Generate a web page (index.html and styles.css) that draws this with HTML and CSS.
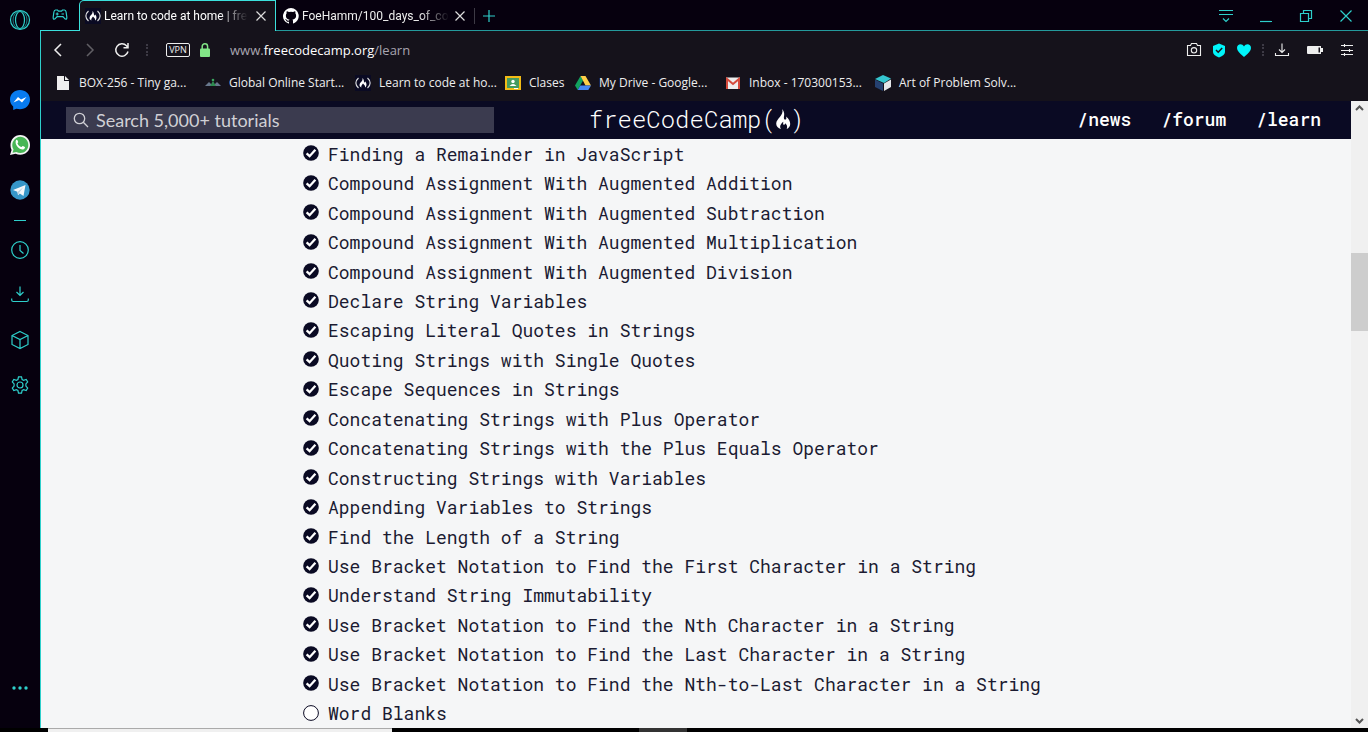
FILE: index.html
```html
<!DOCTYPE html>
<html lang="en">
<head>
<meta charset="utf-8">
<title>Learn to code at home | freeCodeCamp.org</title>
<link rel="stylesheet" href="styles.css">
</head>
<body>
<svg class="defs" aria-hidden="true">
  <symbol id="done" viewBox="0 0 16 16"><circle cx="8" cy="8" r="7.800" fill="#0a0a23"/><path d="M3.600 8.400l3 2.800 5.800-6.400" fill="none" stroke="#fff" stroke-width="2.300"/></symbol>
  <symbol id="todo" viewBox="0 0 16 16"><circle cx="8" cy="8" r="7.400" fill="#fff" stroke="#0a0a23"/></symbol>
  <symbol id="flame" viewBox="0 0 16 24"><path d="M7.300 2C9.500 5 9.500 7.500 8.900 10c-.3 1.800.6 2.800 1.500 2.600 1.200-.2 1.200-1.600.5-3.100 3.200 2 4.300 5.200 4.300 7.500 0 2.400-1.500 4-3.500 5 1-2.500.3-4.100-1.500-5.700-.3 1.300-1 1.700-1.600 1.400-.8-.4-.3-1.700-.3-3C5.500 17 4.300 19.500 6 22 3 21 1.200 19.300 1.200 16.700 1.200 11.500 9 9 7.300 2z" fill="#fff"/></symbol>
  <symbol id="fcc" viewBox="0 0 16 16"><path fill="#0a0a23" d="M0 0h16v16H0z"/><path d="M3.500 3C0 6 0 10 3.500 13M12.500 3c3.500 3 3.500 7 0 10" fill="none" stroke="#ddd" stroke-width="1.200"/><path d="M7.500 3c2 2 1 4 2 4.500.6.2.6-.6.4-1.200C12 8 12 11.500 10 12.500c.5-2-.8-2.500-2-4-1 1.500-2.200 2.500-1.600 4C3 11 5 7.500 7 6c.6-1 .7-2 .5-3z" fill="#fff"/></symbol>
</svg>
<div class="window">
  <aside class="sidebar">
    <button class="side opera" aria-label="Opera menu"><svg width="22" height="22" viewBox="0 0 22 22" class="line"><circle cx="11" cy="11" r="9.500"/><ellipse cx="11" cy="11" rx="4.500" ry="8.500"/><ellipse cx="11" cy="11" rx="7" ry="9" stroke-width=".6"/></svg></button>
    <button class="side" aria-label="Messenger"><svg width="22" height="22" viewBox="0 0 22 22"><path d="M11 1C5.400 1 1 5 1 10.500c0 3 1.200 5.300 3.200 7V21l3.200-1.200c1.200.3 2.300.5 3.600.5 5.600 0 10-4.300 10-9.800S16.600 1 11 1z" fill="#087bef"/><path d="M4.500 13.500L9 8l3 2.500L17.500 8 13 13.500 10 11z" fill="#fff"/></svg></button>
    <button class="side" aria-label="WhatsApp"><svg width="22" height="22" viewBox="0 0 22 22"><path d="M1 21l1.600-5C-.8 9 4 1 11.200 1 17 1 21 5.500 21 11c0 7.500-7.500 12-14.500 8.700z" fill="#f4f4f4"/><path d="M3.500 18.700l1-3.200C1 9.500 5.500 2.700 11.300 2.700c4.700 0 8 3.800 8 8.200 0 6-6 10-12 7z" fill="#47b655"/><path d="M7 6.200c.9-.8 1.500-.4 2.200 1.800.1.600-.8 1-.7 1.400.8 1.800 2 2.900 3.800 3.600.5 0 1-1.200 1.500-1.100 2 .8 2.500 1.200 2.200 1.900C14 19 4.500 11.500 7 6.200z" fill="#fff"/></svg></button>
    <button class="side" aria-label="Telegram"><svg width="22" height="22" viewBox="0 0 22 22"><circle cx="11" cy="11" r="9.700" fill="#3696c8"/><path d="M4 11l12.500-5-2 11-3.700-2.600L9 16.200l-.7-3.400z" fill="#f4f8fa"/><path d="M8.500 13l6-5-4.200 5.500-.8 2.200z" fill="#b8cfdd"/></svg></button>
    <hr class="divider">
    <button class="side" aria-label="History"><svg width="20" height="20" viewBox="0 0 20 20" class="line"><circle cx="10" cy="10" r="8.300"/><path d="M10 5v5.500l3.500 3"/></svg></button>
    <button class="side" aria-label="Downloads"><svg width="20" height="20" viewBox="0 0 20 20" class="line"><path d="M10 1.500v9M6.500 7l3.500 3.500L13.500 7M1.700 13.500V15q0 1.500 1.500 1.500h13.600q1.500 0 1.500-1.500v-1.500"/></svg></button>
    <button class="side" aria-label="Extensions"><svg width="20" height="20" viewBox="0 0 20 20" class="line"><path d="M10 1.500l8 4v9l-8 4-8-4v-9zM2 5.500l8 4 8-4M10 9.500v9"/></svg></button>
    <button class="side" aria-label="Settings"><svg width="20" height="20" viewBox="0 0 20 20" class="line"><circle cx="10" cy="10" r="3"/><path d="M8.500 1.800h3l.6 2.700 1.500.8 2.600-.9 1.500 2.600-1.800 1.900v2.200l1.800 1.900-1.500 2.600-2.600-.9-1.500.8-.6 2.700h-3l-.6-2.700-1.500-.8-2.600.9L2.300 13l1.800-1.900V8.900L2.300 7l1.500-2.600 2.600.9 1.500-.8z"/></svg></button>
    <button class="side more" aria-label="More"><svg width="20" height="8" viewBox="0 0 20 8"><g fill="#2ecfcb"><circle cx="4" cy="4" r="1.700"/><circle cx="10" cy="4" r="1.700"/><circle cx="16" cy="4" r="1.700"/></g></svg></button>
  </aside>
  <div class="browser">
    <div class="tabs">
      <button class="gx" aria-label="GX Corner"><svg width="16" height="14" viewBox="0 0 16 14" class="line"><path d="M3.500 2h2l1 1.200h3L10.500 2h2q1.300.2 1.600 2l.7 5q.2 2.200-1 2.200-1 0-2-1.700l-1-.8H5.200l-1 .8q-1 1.700-2 1.700-1.200 0-1-2.200l.7-5q.3-1.800 1.600-2zM3.700 6h3M5.200 4.500v3M9.500 6H12"/></svg></button>
      <div class="tab active"><svg width="16" height="16"><use href="#fcc"/></svg><span class="tab-title">Learn to code at home | fre</span><button class="close" aria-label="Close tab"><svg width="12" height="12" viewBox="0 0 12 12"><path d="M1.500 1.500l9 9M10.500 1.500l-9 9"/></svg></button></div>
      <div class="tab"><svg width="16" height="16" viewBox="0 0 16 16"><path d="M8 0a8 8 0 0 0-2.500 15.600c.4.100.5-.2.500-.4v-1.500c-2.200.5-2.700-1-2.700-1-.4-.9-.9-1.200-.9-1.200-.7-.5.100-.5.100-.5.800.1 1.200.8 1.200.8.700 1.200 1.900.9 2.300.7.100-.5.300-.9.500-1.100-1.800-.2-3.600-.9-3.600-4 0-.9.300-1.600.8-2.100-.1-.2-.4-1 .1-2.100 0 0 .7-.2 2.200.8a7.500 7.500 0 0 1 4 0c1.500-1 2.200-.8 2.200-.8.400 1.100.2 1.900.1 2.100.5.600.8 1.300.8 2.100 0 3.100-1.900 3.800-3.700 4 .3.300.6.800.6 1.500v2.200c0 .2.100.5.500.4A8 8 0 0 0 8 0z" fill="#fff"/></svg><span class="tab-title">FoeHamm/100_days_of_co</span><button class="close" aria-label="Close tab"><svg width="12" height="12" viewBox="0 0 12 12"><path d="M1.500 1.500l9 9M10.500 1.500l-9 9"/></svg></button></div>
      <span class="tab-divider"></span>
      <button class="new-tab" aria-label="New tab"><svg width="12" height="12" viewBox="0 0 12 12" class="line"><path d="M6 0v12M0 6h12"/></svg></button>
      <div class="controls">
        <button aria-label="Tab menu"><svg width="16" height="16" viewBox="0 0 16 16" class="line"><path d="M1 2.500h14M1 6.500h14M5 10.500l3 3 3-3"/></svg></button>
        <button aria-label="Minimize"><svg width="14" height="14" viewBox="0 0 14 14" class="line"><path d="M1 12.500h12"/></svg></button>
        <button aria-label="Restore"><svg width="14" height="14" viewBox="0 0 14 14" class="line"><path d="M1.500 4.500h8v8h-8zM4.500 4.500v-3h8v8h-3"/></svg></button>
        <button aria-label="Close"><svg width="14" height="14" viewBox="0 0 14 14" class="line"><path d="M1.500 1.500l11 11M12.500 1.500l-11 11"/></svg></button>
      </div>
    </div>
    <div class="frame">
      <div class="address">
        <button aria-label="Back"><svg width="16" height="16" viewBox="0 0 16 16" class="pale"><path d="M11 2L5 8l6 6"/></svg></button>
        <button class="dim" aria-label="Forward"><svg width="16" height="16" viewBox="0 0 16 16" class="pale"><path d="M5 2l6 6-6 6"/></svg></button>
        <button aria-label="Reload"><svg width="16" height="16" viewBox="0 0 16 16" class="pale"><path d="M14 9.500a6.200 6.200 0 1 1-1.500-5.800L14 5.500M14 1v4.700H9.500"/></svg></button>
        <span class="dots"></span>
        <button class="vpn">VPN</button>
        <svg class="lock" width="12" height="16" viewBox="0 0 12 16"><path d="M3.200 7V4.500a2.700 2.700 0 0 1 5.400 0V7" fill="none" stroke="#82e587" stroke-width="1.500"/><rect x="1" y="6.500" width="10" height="8.500" rx="1" fill="#82e587"/></svg>
        <span class="url">www.<b>freecodecamp.org</b>/learn</span>
        <div class="tools">
          <button aria-label="Snapshot"><svg width="16" height="16" viewBox="0 0 16 16" class="pale thin"><path d="M1.500 3.500h3l1-2h5l1 2h3v10h-13z"/><circle cx="8" cy="8.300" r="2.700"/></svg></button>
          <button aria-label="Privacy protection"><svg width="14" height="16" viewBox="0 0 14 16"><path d="M7 1.500L13 4v6q0 3-6 5.500Q1 13 1 10V4z" fill="#00f5fa"/><path d="M4 8l2.200 2.200L10.200 6" fill="none" stroke="#15121b" stroke-width="1.500"/></svg></button>
          <button aria-label="Bookmark"><svg width="16" height="16" viewBox="0 0 16 16"><path d="M8 15Q1 9.500 1 6c0-4 5-5 7-1.500C10 1 15 2 15 6q0 3.500-7 9z" fill="#00f5fa"/></svg></button>
          <span class="dots"></span>
          <button aria-label="Downloads"><svg width="16" height="16" viewBox="0 0 16 16" class="pale thin"><path d="M8 1.500v9M5 7.500l3 3 3-3M1.500 11v2.500h13V11"/></svg></button>
          <button aria-label="Battery"><svg width="18" height="16" viewBox="0 0 18 16"><path d="M2 4h13v2h2v4h-2v2H2q-1 0-1-1V5q0-1 1-1z" fill="#eee"/><path d="M12.500 5.500h1.500v5h-1.500z" fill="#15121b"/></svg></button>
          <button aria-label="Easy setup"><svg width="14" height="16" viewBox="0 0 14 16" class="pale thin"><path d="M1 3.500h12M1 8.500h12M1 12.500h12M4.500 2v3M9.500 7v3M4.500 11v3"/></svg></button>
        </div>
      </div>
      <nav class="bookmarks">
        <a href="#"><svg width="16" height="16" viewBox="0 0 16 16"><path d="M2 1h7v5h5v9H2z" fill="#eee"/><path d="M10 1l4 4h-4z" fill="#eee"/></svg>BOX-256 - Tiny ga...</a>
        <a href="#"><svg width="16" height="16" viewBox="0 0 16 16"><path d="M0 11l4-4 4 4zM8 11l4-4 4 4z" fill="#68788d"/><path d="M5 11l3-5 3 5z" fill="#2e8b50"/><circle cx="8" cy="5" r="1.300" fill="#3ba45e"/></svg>Global Online Start...</a>
        <a href="#"><svg width="16" height="16"><use href="#fcc"/></svg>Learn to code at ho...</a>
        <a href="#" class="short"><svg width="16" height="16" viewBox="0 0 16 16"><path d="M0 1h16v14H0z" fill="#f2bb16"/><path d="M2 3h12v10H2z" fill="#459b60"/><circle cx="8" cy="6.500" r="1.700" fill="#fff"/><path d="M4.500 11q3.500-4 7 0z" fill="#fff"/><path d="M9 13h4v1H9z" fill="#fff"/></svg>Clases</a>
        <a href="#"><svg width="16" height="16" viewBox="0 0 16 16"><path d="M5.500 1L0 10.500 2.700 15 8 5.500z" fill="#12a15f"/><path d="M5.500 1h5l5.500 9.500h-5.500z" fill="#ffcf48"/><path d="M2.700 15l2.600-4.500H16L13.300 15z" fill="#4688f4"/></svg>My Drive - Google...</a>
        <a href="#"><svg width="16" height="16" viewBox="0 0 16 16"><path d="M1 2.500h14v11.500H1z" fill="#eee"/><path d="M2 14V4l6 5 6-5v10" fill="none" stroke="#d54b3d" stroke-width="2"/></svg>Inbox - 170300153...</a>
        <a href="#"><svg width="16" height="16" viewBox="0 0 16 16"><path d="M8 0l8 3.500L9 8 0 4z" fill="#34c5cf"/><path d="M0 4.500l8 4V16l-8-4z" fill="#254171"/><path d="M9 8.500l7-4V12l-7 4z" fill="#e4e6e9"/></svg>Art of Problem Solv...</a>
      </nav>
      <div class="viewport">
        <div class="page">
          <header class="site-header">
            <label class="search"><svg width="18" height="18" viewBox="0 0 18 18"><circle cx="7.500" cy="7.500" r="5.200"/><path d="M11.300 11.300l4.700 4.700"/></svg><input type="text" aria-label="Search" placeholder="Search 5,000+ tutorials"></label>
            <a class="logo" href="#">freeCodeCamp(<svg width="16" height="24"><use href="#flame"/></svg>)</a>
            <nav class="links"><a href="#">/news</a><a href="#">/forum</a><a href="#">/learn</a></nav>
          </header>
          <ul class="lessons">
            <li><svg><use href="#done"/></svg><a href="#">Finding a Remainder in JavaScript</a></li>
            <li><svg><use href="#done"/></svg><a href="#">Compound Assignment With Augmented Addition</a></li>
            <li><svg><use href="#done"/></svg><a href="#">Compound Assignment With Augmented Subtraction</a></li>
            <li><svg><use href="#done"/></svg><a href="#">Compound Assignment With Augmented Multiplication</a></li>
            <li><svg><use href="#done"/></svg><a href="#">Compound Assignment With Augmented Division</a></li>
            <li><svg><use href="#done"/></svg><a href="#">Declare String Variables</a></li>
            <li><svg><use href="#done"/></svg><a href="#">Escaping Literal Quotes in Strings</a></li>
            <li><svg><use href="#done"/></svg><a href="#">Quoting Strings with Single Quotes</a></li>
            <li><svg><use href="#done"/></svg><a href="#">Escape Sequences in Strings</a></li>
            <li><svg><use href="#done"/></svg><a href="#">Concatenating Strings with Plus Operator</a></li>
            <li><svg><use href="#done"/></svg><a href="#">Concatenating Strings with the Plus Equals Operator</a></li>
            <li><svg><use href="#done"/></svg><a href="#">Constructing Strings with Variables</a></li>
            <li><svg><use href="#done"/></svg><a href="#">Appending Variables to Strings</a></li>
            <li><svg><use href="#done"/></svg><a href="#">Find the Length of a String</a></li>
            <li><svg><use href="#done"/></svg><a href="#">Use Bracket Notation to Find the First Character in a String</a></li>
            <li><svg><use href="#done"/></svg><a href="#">Understand String Immutability</a></li>
            <li><svg><use href="#done"/></svg><a href="#">Use Bracket Notation to Find the Nth Character in a String</a></li>
            <li><svg><use href="#done"/></svg><a href="#">Use Bracket Notation to Find the Last Character in a String</a></li>
            <li><svg><use href="#done"/></svg><a href="#">Use Bracket Notation to Find the Nth-to-Last Character in a String</a></li>
            <li><svg><use href="#todo"/></svg><a href="#">Word Blanks</a></li>
          </ul>
        </div>
        <div class="scrollbar">
          <svg width="11" height="17" viewBox="0 0 11 17"><path d="M2 9l3.500-3.500L9 9"/></svg>
          <div class="track"><div class="thumb"></div></div>
          <svg width="11" height="17" viewBox="0 0 11 17"><path d="M2 8l3.500 3.500L9 8"/></svg>
        </div>
      </div>
    </div>
  </div>
</div>
<div class="taskbar"><div class="task-search"></div><div class="task-app"></div></div>
</body>
</html>
```
FILE: styles.css
```css
* { box-sizing: border-box; }
body {
  margin: 0;
  height: 100vh;
  display: flex;
  flex-direction: column;
  overflow: hidden;
  background: #000;
  color: #eee;
  font: 12px/16px "Segoe UI", "Open Sans", sans-serif;
}
button {
  display: flex;
  align-items: center;
  justify-content: center;
  margin: 0;
  padding: 0;
  border: 0;
  background: none;
  color: inherit;
  font: inherit;
}
a { color: inherit; text-decoration: none; }
svg { display: block; flex: none; }
.defs { position: absolute; width: 0; height: 0; }
.line { fill: none; stroke: #2ecfcb; stroke-width: 1.2; }
.pale { fill: none; stroke: #eee; stroke-width: 1.5; }
.thin { stroke-width: 1.1; }

.window { flex: 1; min-height: 0; display: flex; }
.sidebar {
  flex: none;
  width: 40px;
  display: flex;
  flex-direction: column;
  align-items: center;
  background: #06000e;
}
.side { width: 40px; height: 45px; flex: none; }
.opera { height: 40px; margin-bottom: 37px; }
.divider { width: 12px; height: 1px; margin: 8px 0 6px; border: 0; background: #2ecfcb; }
.more { height: 16px; margin-top: auto; margin-bottom: 32px; }

.browser { flex: 1; min-width: 0; display: flex; flex-direction: column; }
.tabs { display: flex; height: 31px; background: linear-gradient(#249a9c, #249a9c) bottom / 100% 1px no-repeat #06000e; }
.gx { width: 39px; border-bottom: 1px solid #3be0dc; }
.tab {
  display: flex;
  align-items: center;
  width: 198px;
  padding: 0 6px 0 7px;
  gap: 3px;
}
.active {
  width: 197px;
  padding-left: 5px;
  padding-right: 4px;
  border: 1px solid #3be0dc;
  border-bottom: 0;
  border-radius: 5px 0 0 0;
  background: #15121b;
  color: #fff;
}
.tab-title {
  flex: 1;
  font-family: "Segoe UI", Roboto, sans-serif;
  white-space: nowrap;
  mask-image: linear-gradient(to right, #000 80%, transparent);
}
.close { width: 20px; height: 20px; }
.close svg { stroke: #ddd; stroke-width: 1.2; }
.tab-divider { align-self: center; width: 1px; height: 16px; background: #3d3a45; }
.new-tab { width: 28px; }
.controls {
  flex: 1;
  display: flex;
  justify-content: flex-end;
  gap: 10px;
  padding-right: 7px;
}
.controls button { width: 30px; }

.frame {
  flex: 1;
  min-height: 0;
  display: flex;
  flex-direction: column;
  border-left: 1px solid #2ecfcb;
  background: #15121b;
}
.address { display: flex; align-items: center; height: 37px; padding: 0 14px 0 9px; gap: 16px; }
.dim { opacity: 0.35; }
.dots { width: 2px; height: 12px; border-left: 2px dotted #3d3a45; }
.vpn {
  width: 24px;
  height: 14px;
  margin-left: 2px;
  border: 1px solid #eee;
  border-radius: 2px;
  font-size: 9px;
  line-height: 12px;
}
.lock { margin-left: -7px; }
.url { flex: 1; padding-left: 3px; font-size: 13px; color: #a8a5b0; }
.url b { font-weight: 400; color: #fff; }
.tools { display: flex; align-items: center; gap: 10px; }
.tools .dots ~ button + button { margin-left: 6px; }
.bookmarks { display: flex; height: 33px; padding: 0 0 3px 14px; }
.bookmarks a { width: 150px; display: flex; align-items: center; gap: 8px; white-space: nowrap; }
.bookmarks .short { width: 70px; }

.viewport { flex: 1; min-height: 0; display: flex; }
.page { flex: 1; min-width: 0; display: flex; flex-direction: column; background: #f5f6f7; }
.site-header {
  display: grid;
  grid-template-columns: 1fr auto 1fr;
  align-items: center;
  height: 38px;
  padding: 0 30px 0 25px;
  background: #0a0a23;
  color: #fff;
}
.search {
  display: flex;
  align-items: center;
  width: 428px;
  height: 26px;
  padding-left: 6px;
  gap: 6px;
  background: #3b3b4f;
}
.search svg { fill: none; stroke: #d0d0d5; stroke-width: 1.3; }
.search input {
  flex: 1;
  min-width: 0;
  padding: 0;
  border: 0;
  background: none;
  color: #d0d0d5;
  font: 18px/26px Lato, sans-serif;
}
.search input::placeholder { color: #d0d0d5; opacity: 1; }
.logo { display: flex; align-items: center; padding: 0 0 2px 6px; font: 300 24px/34px "Roboto Mono", "Liberation Mono", monospace; }
.logo svg { margin: 0 -1px; }
.links {
  display: flex;
  justify-content: flex-end;
  gap: 30px;
  padding-bottom: 2px;
  font: 500 18px/24px "Roboto Mono", "Liberation Mono", monospace;
}
.lessons {
  flex: 1;
  min-height: 0;
  display: grid;
  grid-auto-rows: 1fr;
  margin: 0;
  padding: 0 0 0 20%;
  list-style: none;
  color: #1b1b32;
  font: 18px/24px "Roboto Mono", "Liberation Mono", monospace;
}
.lessons li { display: flex; align-items: center; gap: 9px; white-space: nowrap; }
.lessons svg { width: 16px; height: 17px; padding-bottom: 1px; }
.scrollbar { width: 17px; display: flex; flex-direction: column; align-items: center; background: #f0f0f0; }
.scrollbar svg { fill: none; stroke: #555; stroke-width: 2; }
.track { flex: 1; width: 100%; padding-top: 135px; }
.thumb { height: 78px; background: #cdcdcd; }

.taskbar { display: flex; height: 4px; padding-left: 48px; background: #000; }
.task-search { width: 344px; border-top: 1px solid #aaa; background: #f0f0f0; }
.task-app { width: 48px; margin-left: 247px; background: #333; }
```
